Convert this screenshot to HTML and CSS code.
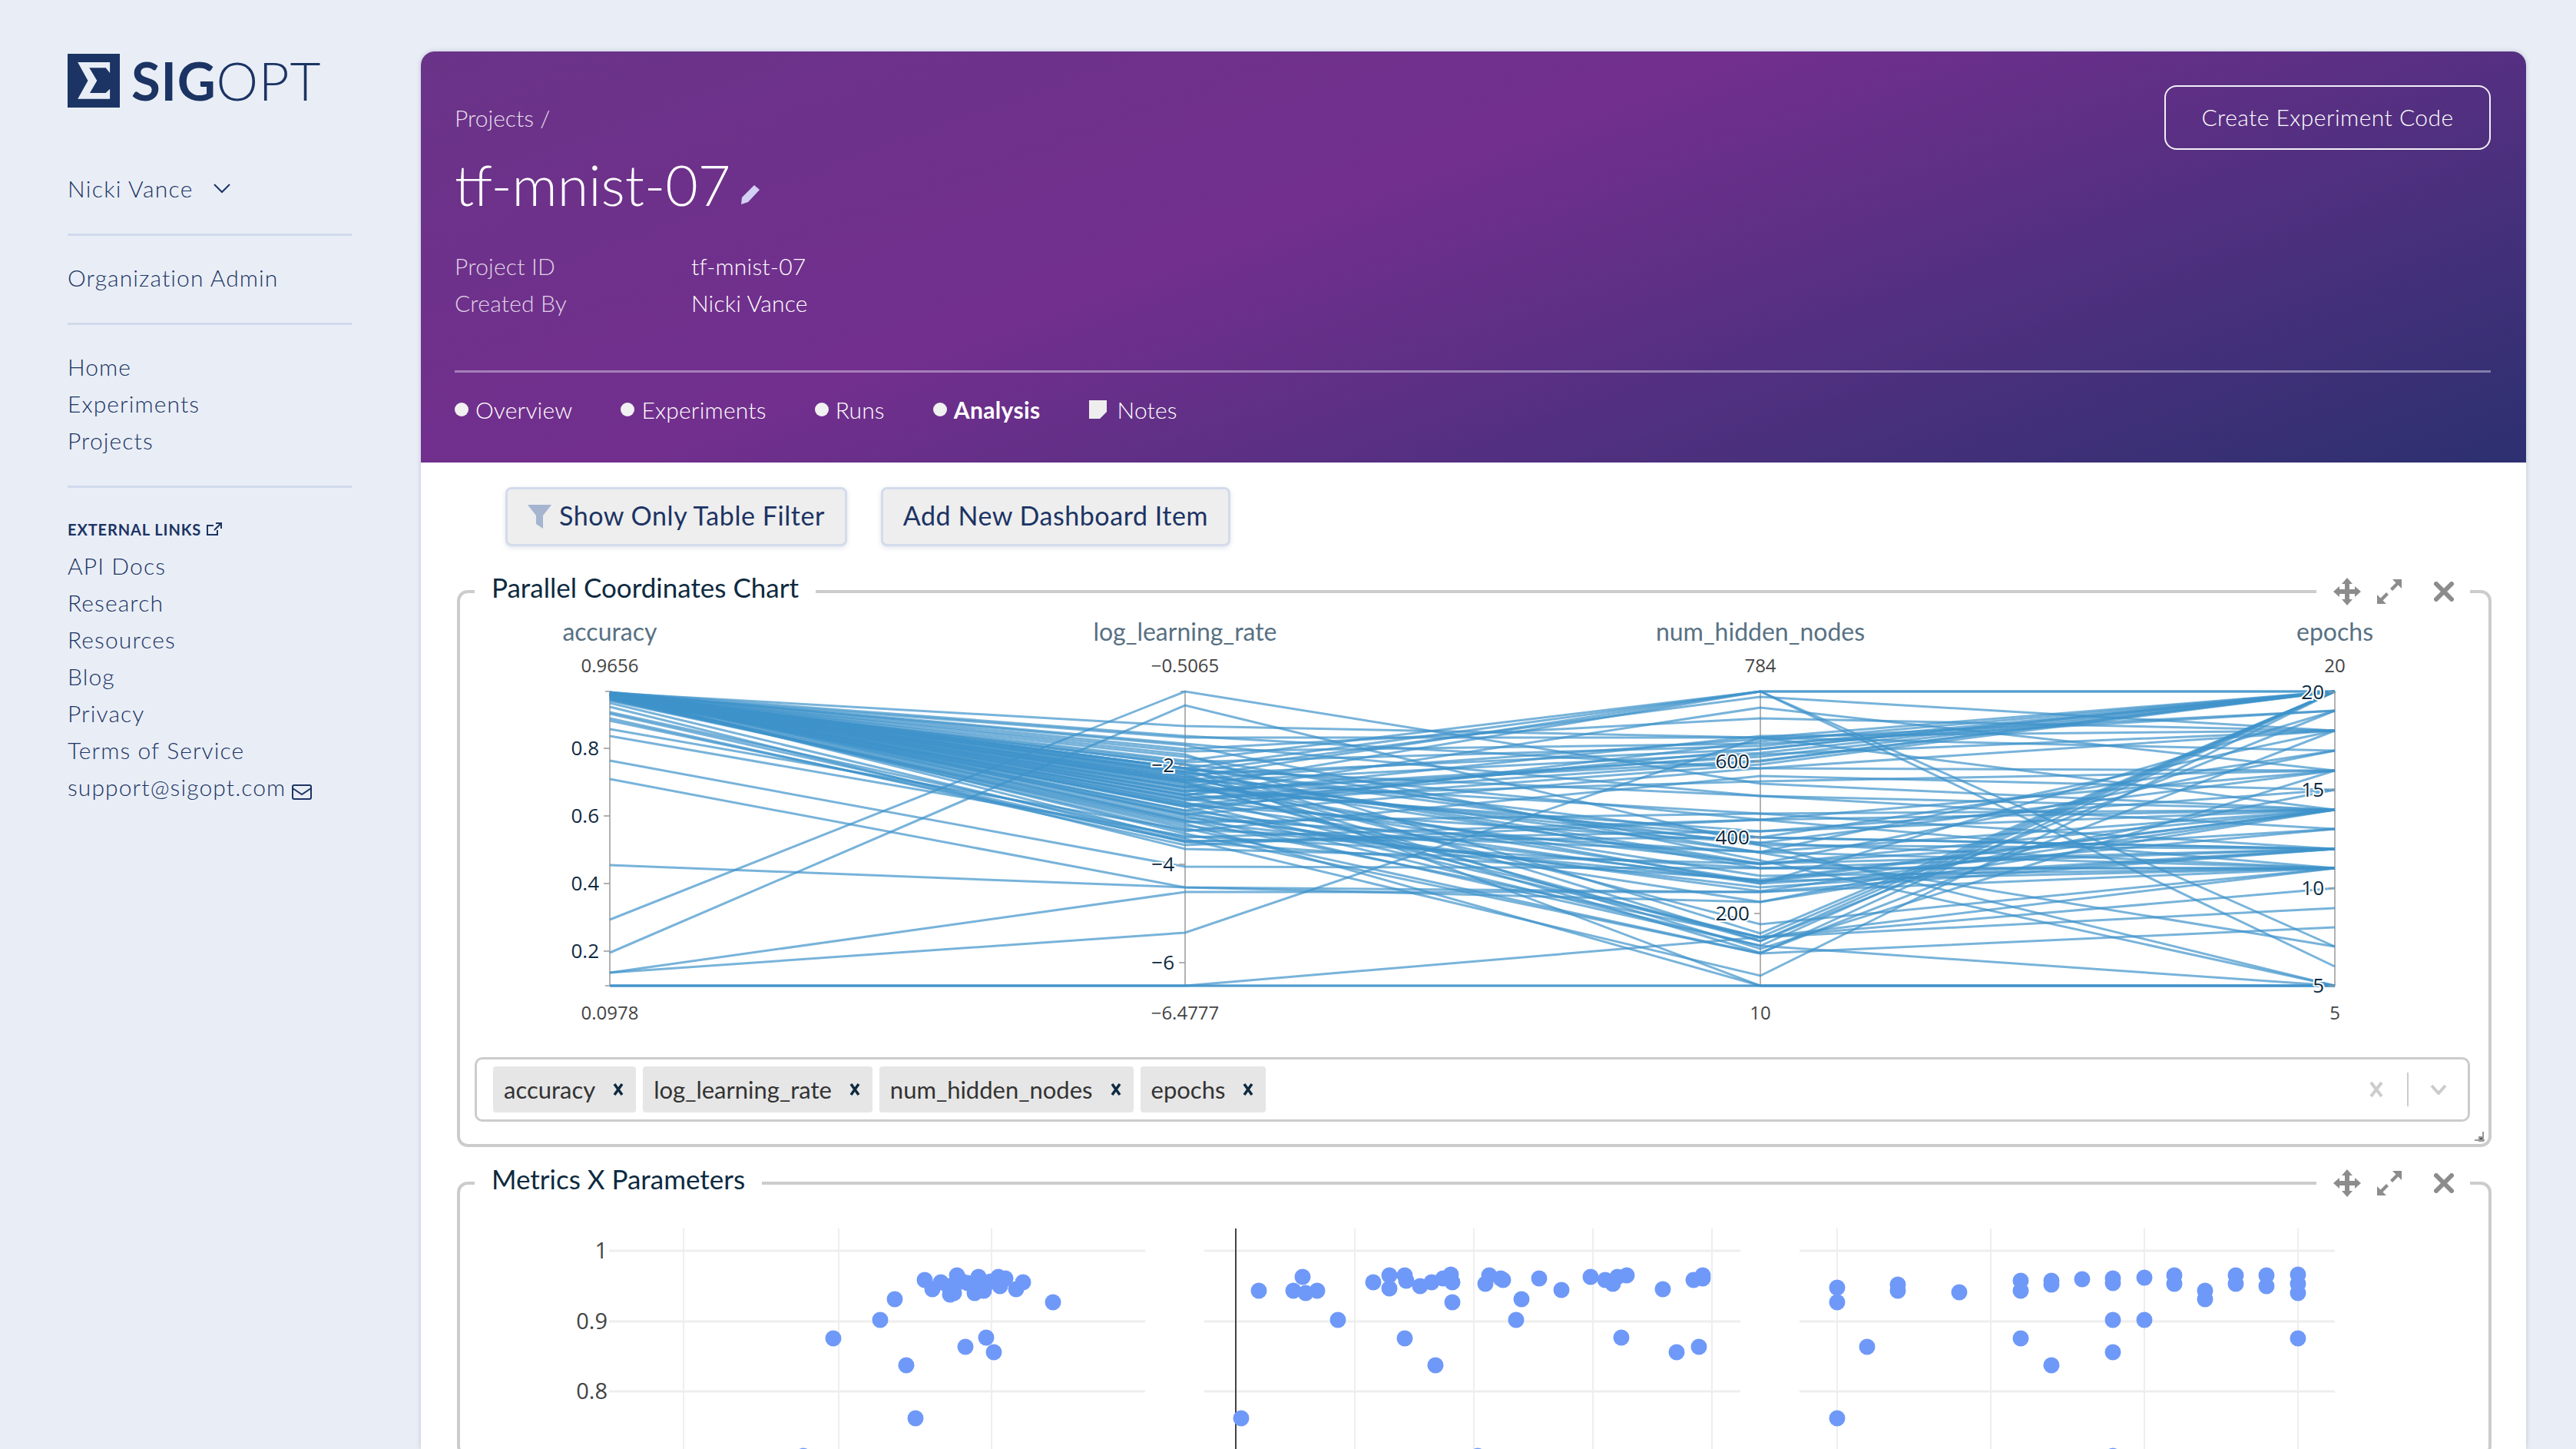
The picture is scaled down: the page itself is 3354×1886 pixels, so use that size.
FILE: index.html
```html
<!DOCTYPE html>
<html lang="en">
<head>
  <meta charset="UTF-8">
  <title>tf-mnist-07 - SigOpt</title>
  <link rel="stylesheet" href="styles.css">
</head>
<body>

  <aside class="sidebar">
    <div class="logo">
      <svg class="logo-mark" viewBox="246 210 190 210" preserveAspectRatio="none">
        <rect x="246" y="210" width="190" height="210" fill="#1c3464"/>
        <path d="M283 243H400V285L385 265H325L353 315 327 363H385L400 347V386H283L320 315Z" fill="#e9eef6"/>
      </svg>
      <span class="logo-text"><b>SIG</b>OPT</span>
    </div>

    <div class="user">
      Nicki Vance
      <svg class="user-chevron" viewBox="0 0 22 13"><path d="M1 1l10 10L21 1"/></svg>
    </div>

    <nav class="nav-section"><a>Organization Admin</a></nav>

    <nav class="nav-section">
      <a>Home</a>
      <a>Experiments</a>
      <a>Projects</a>
    </nav>

    <nav class="nav-section">
      <div class="nav-title">
        EXTERNAL LINKS
        <svg viewBox="0 0 20 18"><path d="M14 10v6H1V4h8M12 1h7v7M19 1l-9 9"/></svg>
      </div>
      <a>API Docs</a>
      <a>Research</a>
      <a>Resources</a>
      <a>Blog</a>
      <a>Privacy</a>
      <a>Terms of Service</a>
      <a>support@sigopt.com <svg class="mail" viewBox="0 0 26 20"><rect x="1" y="1" width="24" height="18" rx="2"/><path d="M1 5l12 8 12-8"/></svg></a>
    </nav>
  </aside>

  <main class="main">
    <header class="hero">
      <div class="hero-top">
        <div class="crumb">Projects /</div>
        <a class="hero-btn">Create Experiment Code</a>
      </div>
      <h1>tf-mnist-07 <svg class="pencil" viewBox="0 0 26 26"><path d="M18 1l7 6L10 23l-9 3 1-9z"/></svg></h1>
      <dl class="meta">
        <dt>Project ID</dt><dd>tf-mnist-07</dd>
        <dt>Created By</dt><dd>Nicki Vance</dd>
      </dl>
      <ul class="tabs">
        <li><i class="dot"></i>Overview</li>
        <li><i class="dot"></i>Experiments</li>
        <li><i class="dot"></i>Runs</li>
        <li class="active"><i class="dot"></i>Analysis</li>
        <li><svg class="note" viewBox="0 0 23 24"><path d="M0 0h23v15l-9 9H0z"/></svg>Notes</li>
      </ul>
    </header>

    <section class="dash">
      <div class="actions">
        <button type="button"><svg class="funnel" viewBox="0 0 31 31"><path d="M0 0h31L20 14v17l-9-6V14z"/></svg>Show Only Table Filter</button>
        <button type="button">Add New Dashboard Item</button>
      </div>

      <div class="card card-parcoords">
        <div class="card-head">
          <h2>Parallel Coordinates Chart</h2>
          <div class="tools">
            <svg class="tool-move" viewBox="0 0 36 36"><path d="M18 0l7 8h-4v7h7v-4l8 7-8 7v-4h-7v7h4l-7 8-7-8h4v-7H8v4l-8-7 8-7v4h7V8h-4z"/></svg>
            <svg class="tool-expand" viewBox="0 0 32 32"><path d="M20 0H32V12L27.5 7.5 20 15 17 12 24.500 4.500ZM12 32H0V20L4.500 24.500 12 17 15 20 7.500 27.500Z"/></svg>
            <svg class="tool-close" viewBox="0 0 26 26"><path d="M3 3l20 20M23 3L3 23"/></svg>
          </div>
        </div>

        <svg id="parcoords" class="parcoords" viewBox="599 772 2640 588"></svg>

        <div class="select">
          <span class="chip">accuracy<svg viewBox="0 0 14 18"><path d="M2 2l10 14M12 2L2 16"/></svg></span>
          <span class="chip">log_learning_rate<svg viewBox="0 0 14 18"><path d="M2 2l10 14M12 2L2 16"/></svg></span>
          <span class="chip">num_hidden_nodes<svg viewBox="0 0 14 18"><path d="M2 2l10 14M12 2L2 16"/></svg></span>
          <span class="chip">epochs<svg viewBox="0 0 14 18"><path d="M2 2l10 14M12 2L2 16"/></svg></span>
          <div class="select-ctrl">
            <svg class="select-clear" viewBox="0 0 20 22"><path d="M3 2l14 18M17 2L3 20"/></svg>
            <i class="select-sep"></i>
            <svg class="select-arrow" viewBox="0 0 22 14"><path d="M2 2l9 10 9-10"/></svg>
          </div>
        </div>

        <svg class="resize" viewBox="0 0 13 13"><path d="M11 0v13M0 11h13M6 7h5v5H6z"/></svg>
      </div>

      <div class="card card-scatter">
        <div class="card-head">
          <h2>Metrics X Parameters</h2>
          <div class="tools">
            <svg class="tool-move" viewBox="0 0 36 36"><path d="M18 0l7 8h-4v7h7v-4l8 7-8 7v-4h-7v7h4l-7 8-7-8h4v-7H8v4l-8-7 8-7v4h7V8h-4z"/></svg>
            <svg class="tool-expand" viewBox="0 0 32 32"><path d="M20 0H32V12L27.5 7.5 20 15 17 12 24.500 4.500ZM12 32H0V20L4.500 24.500 12 17 15 20 7.500 27.500Z"/></svg>
            <svg class="tool-close" viewBox="0 0 26 26"><path d="M3 3l20 20M23 3L3 23"/></svg>
          </div>
        </div>
        <div class="scatter-row">
          <svg id="scatter1" class="scatter-a" viewBox="740 1542 790 350"></svg>
          <svg id="scatter2" class="scatter-b" viewBox="1530 1542 770 350"></svg>
          <svg id="scatter3" class="scatter-c" viewBox="2300 1542 760 350"></svg>
        </div>
      </div>
    </section>
  </main>

  <script src="chart.js"></script>

</body>
</html>
```

FILE: styles.css
```css
* {
  box-sizing: border-box;
}

html, body {
  margin: 0;
  height: 1886px;
  overflow: hidden;
}

body {
  display: flex;
  background: #e9eef6;
  font-family: Lato, "Open Sans", sans-serif;
  color: #1c3464;
}

/* sidebar */

.sidebar {
  width: 548px;
  flex: none;
  padding: 70px 90px 0 88px;
  font-size: 30px;
  font-weight: 300;
  letter-spacing: 1.1px;
}

.logo {
  display: flex;
  align-items: center;
  height: 70px;
}

.logo-mark {
  width: 68px;
  height: 70px;
  margin-right: 15px;
}

.logo-text {
  font-size: 69px;
  line-height: 70px;
  letter-spacing: 0.7px;
}

.logo-text b {
  font-weight: 700;
}

.user {
  display: flex;
  align-items: center;
  height: 50px;
  margin-top: 81px;
  padding-bottom: 2px;
  letter-spacing: 1.3px;
}

.user-chevron {
  width: 22px;
  height: 13px;
  margin-left: 26px;
  fill: none;
  stroke: #1c3464;
  stroke-width: 2;
}

.nav-section {
  margin-top: 33px;
  padding-top: 30px;
  padding-bottom: 2px;
  border-top: 3px solid #d0daec;
}

.nav-section a {
  display: block;
  line-height: 48px;
}

.mail {
  width: 26px;
  height: 20px;
  margin-left: -2px;
  vertical-align: -5px;
  fill: none;
  stroke: #1c3464;
  stroke-width: 2;
}

.nav-title {
  display: flex;
  align-items: center;
  height: 30px;
  margin: 9px 0 8px;
  font-size: 20px;
  font-weight: 700;
  letter-spacing: 0.9px;
}

.nav-title svg {
  width: 20px;
  height: 18px;
  margin-left: 7px;
  fill: none;
  stroke: #1c3464;
  stroke-width: 2;
}

/* page */

.main {
  width: 2741px;
  flex: none;
  margin-top: 67px;
  background: #fff;
  border-radius: 18px 18px 0 0;
  box-shadow: 0 0 6px rgba(60, 70, 120, 0.25);
}

.hero {
  height: 535px;
  padding: 44px 46px 0 44px;
  border-radius: 18px 18px 0 0;
  background: linear-gradient(160deg, #6a3388 0%, #722f8e 41%, #2c3070 100%);
  color: #fff;
}

.hero-top {
  display: flex;
  align-items: center;
  justify-content: space-between;
  height: 84px;
}

.crumb {
  font-size: 30px;
  font-weight: 300;
  color: rgba(255, 255, 255, 0.85);
}

.hero-btn {
  width: 425px;
  height: 84px;
  line-height: 79px;
  text-align: center;
  border: 2px solid #f2f0f5;
  border-radius: 16px;
  font-size: 30px;
  font-weight: 300;
  letter-spacing: 0.45px;
}

.hero h1 {
  display: flex;
  align-items: flex-end;
  height: 86px;
  margin: 2px 0 0;
  font-size: 73.5px;
  line-height: 86px;
  font-weight: 300;
  white-space: pre;
}

.pencil {
  width: 26px;
  height: 26px;
  margin: 0 0 17px -7px;
  fill: #d3d0f5;
}

.meta {
  display: grid;
  grid-template-columns: 308px auto;
  margin: 39px 0 0;
  font-size: 30px;
  font-weight: 300;
  line-height: 48px;
  letter-spacing: 0.2px;
}

.meta dt {
  color: rgba(255, 255, 255, 0.8);
}

.meta dd {
  margin: 0;
}

.tabs {
  display: flex;
  gap: 63px;
  height: 103px;
  margin: 64px 0 0;
  padding: 0 0 4px;
  align-items: center;
  list-style: none;
  border-top: 3px solid rgba(255, 255, 255, 0.38);
  font-size: 30px;
  font-weight: 300;
  letter-spacing: 0.2px;
}

.tabs li {
  display: flex;
  align-items: center;
}

.tabs .active {
  font-weight: 700;
  letter-spacing: 0.35px;
}

.dot {
  width: 18px;
  height: 18px;
  margin-right: 9px;
  border-radius: 50%;
  background: #f1f1f1;
}

.note {
  width: 23px;
  height: 24px;
  margin-right: 14px;
  fill: #eee;
}

/* dashboard */

.dash {
  padding: 32px 45px 0 47px;
}

.actions {
  display: flex;
  gap: 44px;
  margin-left: 63px;
}

.actions button {
  display: flex;
  align-items: center;
  height: 77px;
  padding: 0 26px 5px;
  background: #eee;
  border: 3px solid #d3dbec;
  border-radius: 8px;
  box-shadow: 0 2px 6px rgba(40, 60, 110, 0.14);
  font-family: inherit;
  font-size: 34px;
  color: #1c3464;
  letter-spacing: 0.55px;
}

.funnel {
  width: 31px;
  height: 31px;
  margin: 5px 10px 0 0;
  fill: #a5b4cf;
}

.card {
  position: relative;
  border: 4px solid #ccc;
  border-radius: 14px;
}

.card-parcoords {
  margin-top: 57px;
  padding-bottom: 29px;
}

.card-scatter {
  margin-top: 45px;
}

.card-head {
  position: absolute;
  top: -27px;
  left: 19px;
  right: 24px;
  height: 50px;
  display: flex;
  justify-content: space-between;
  align-items: center;
}

.card-head h2 {
  align-self: flex-start;
  margin: 0;
  padding: 0 22px;
  background: #fff;
  font-size: 35px;
  line-height: 38px;
  height: 50px;
  font-weight: 400;
  color: #0e2a40;
}

.tools {
  width: 200px;
  height: 50px;
  display: flex;
  align-items: center;
  background: #fff;
}

.tool-move {
  width: 36px;
  height: 36px;
  margin-left: 22px;
  fill: #8c8c8c;
}

.tool-expand {
  width: 32px;
  height: 32px;
  margin-left: 21px;
  fill: #8c8c8c;
}

.tool-close {
  width: 26px;
  height: 26px;
  margin-left: 42px;
  fill: none;
  stroke: #8c8c8c;
  stroke-width: 6;
  stroke-linecap: round;
}

.parcoords {
  display: block;
  width: 2640px;
  height: 588px;
  margin-bottom: 16px;
}

.select {
  display: flex;
  align-items: center;
  gap: 9px;
  height: 84px;
  margin: 0 24px 0 19px;
  padding-left: 21px;
  border: 3px solid #ccc;
  border-radius: 10px;
}

.chip {
  display: flex;
  align-items: center;
  height: 60px;
  padding: 0 15px 0 14px;
  background: #e6e6e6;
  border-radius: 4px;
  font-size: 31px;
  color: #333;
}

.chip svg {
  width: 16px;
  height: 18px;
  margin-left: 22px;
  fill: none;
  stroke: #0e2a40;
  stroke-width: 3.5;
}

.select-ctrl {
  display: flex;
  align-items: center;
  margin-left: auto;
  padding-right: 27px;
}

.select-clear {
  width: 20px;
  height: 22px;
  fill: none;
  stroke: #ccc;
  stroke-width: 4;
}

.select-sep {
  width: 2px;
  height: 44px;
  margin: 0 28px 0 30px;
  background: #ccc;
}

.select-arrow {
  width: 22px;
  height: 14px;
  fill: none;
  stroke: #ccc;
  stroke-width: 4;
}

.resize {
  position: absolute;
  right: 5px;
  bottom: 3px;
  width: 13px;
  height: 13px;
  fill: #555;
  stroke: #999;
  stroke-width: 2;
}

.scatter-row {
  display: flex;
  padding-left: 141px;
}

.scatter-row svg {
  display: block;
  flex: none;
  height: 350px;
}

.scatter-a {
  width: 790px;
}

.scatter-b {
  width: 770px;
}

.scatter-c {
  width: 760px;
}

/* chart text and marks */

.axis-title {
  font-family: Lato, sans-serif;
  font-size: 32px;
  fill: #587183;
  text-anchor: middle;
}

.axis-end {
  font-family: "Open Sans", sans-serif;
  font-size: 24px;
  fill: #444;
  text-anchor: middle;
}

.axis-tick {
  font-family: "Open Sans", sans-serif;
  font-size: 26px;
  fill: #0e2a40;
  text-anchor: end;
  paint-order: stroke;
  stroke: #fff;
  stroke-width: 4px;
}

.axis-line {
  stroke: #999;
  stroke-width: 1.500;
  fill: none;
}

.pc-line {
  fill: none;
  stroke: #3f93cb;
  stroke-width: 3;
  stroke-opacity: 0.7;
}

.grid-h {
  stroke: #eee;
  stroke-width: 3;
}

.grid-v {
  stroke: #eee;
  stroke-width: 2;
}

.grid-zero {
  stroke: #444;
  stroke-width: 2;
}

.dot-mark {
  fill: #6f99f8;
}

.y-label {
  font-family: "Open Sans", sans-serif;
  font-size: 29px;
  fill: #444;
  text-anchor: end;
}
```

FILE: chart.js
```js
const NS = "http://www.w3.org/2000/svg";

function add(svg, tag, attrs, text) {
  const el = document.createElementNS(NS, tag);
  for (const k in attrs) el.setAttribute(k, attrs[k]);
  if (text) el.textContent = text;
  svg.appendChild(el);
  return el;
}

// axis positions of the parallel chart
const axes = [
  { x: 794, name: "accuracy", top: "0.9656", bottom: "0.0978", ticks: [["0.8", 974], ["0.6", 1062], ["0.4", 1150], ["0.2", 1238]] },
  { x: 1543, name: "log_learning_rate", top: "\u22120.5065", bottom: "\u22126.4777", ticks: [["\u22122", 996], ["\u22124", 1125], ["\u22126", 1253]] },
  { x: 2292, name: "num_hidden_nodes", top: "784", bottom: "10", ticks: [["600", 991], ["400", 1090], ["200", 1189]] },
  { x: 3040, name: "epochs", top: "20", bottom: "5", ticks: [["20", 901], ["15", 1028], ["10", 1156], ["5", 1283]] }
];

// one row per run: y of the line on each axis
const runs = [
  [903,1000,900,900],[905,1012,900,900],[902,990,900,1258],[906,1025,900,1232],
  [904,1005,907,951],[907,1035,921,1003],[901,975,935,951],[1197,900,1020,1054],
  [1240,918,1100,1105],[903,960,960,900],[905,992,971,900],[902,1008,975,900],
  [904,1018,980,900],[908,1030,985,900],[906,1042,991,900],[903,978,968,925],
  [907,1050,995,900],[905,1060,1000,951],[909,1038,1017,1003],[902,968,1036,1054],
  [904,1002,1036,1079],[911,1070,1059,1054],[906,1015,1059,1105],[903,995,1067,1054],
  [927,1090,1067,1130],[938,1095,1082,1028],[905,1028,1082,1054],[902,1000,1090,1105],
  [907,1048,1097,1130],[904,1022,1097,1003],[949,1080,1109,1054],[908,1065,1109,1130],
  [903,1012,1109,951],[906,1040,1124,1105],[905,1005,1124,977],[958,1088,1130,1105],
  [910,1075,1147,1054],[902,1032,1147,1130],[904,1055,1147,1079],[906,1018,1150,925],
  [1126,1155,1161,1105],[1266,1161,1161,1130],[1014,1155,1174,1054],[990,1128,1130,1130],
  [903,1058,1174,1028],[907,1010,1203,1130],[905,1045,1220,900],[909,1068,1220,1156],
  [903,1035,1220,1182],[904,1020,1225,900],[906,1062,1231,900],[902,1050,1231,1283],
  [908,1078,1241,900],[905,1085,1241,1207],[1266,1214,960,1054],[904,1092,1270,900],
  [906,1000,1283,1283],[912,1072,1283,1283],[1283,1283,1220,1130],[1283,1283,1283,1283],
  [1283,1283,1283,1283],[935,1100,1067,1003],[915,1095,1090,977],[920,1105,1124,1079],
  [902,1000,1100,1283],[904,985,1110,1232],[901,1015,1125,1054],[903,1045,1150,1105],
  [902,970,1120,1283],[904,1025,1140,1130],[901,1005,1130,1130],[903,1060,1160,1054],
  [902,982,1215,900],[904,995,1225,925],[903,1008,1235,1003],[905,1018,1240,951],
  [904,1015,962,925],[903,1035,958,951],[905,1048,975,900],[902,1030,990,900],
  [906,1055,965,900],[903,1040,982,951],[901,958,1000,1003],[908,1082,1010,1028],
  [929,1096,1145,1054],[903,1068,1155,1105],[902,945,960,977],[905,1024,1090,1105]
];

const pc = document.getElementById("parcoords");

axes.forEach(a => {
  add(pc, "text", { class: "axis-title", x: a.x, y: 834 }, a.name);
  add(pc, "text", { class: "axis-end", x: a.x, y: 875 }, a.top);
  add(pc, "text", { class: "axis-end", x: a.x, y: 1327 }, a.bottom);
  add(pc, "path", { class: "axis-line", d: `M${a.x - 6} 900H${a.x}V1283H${a.x - 6}` });
});

runs.forEach(r => {
  const pts = r.map((y, i) => axes[i].x + "," + y).join(" ");
  add(pc, "polyline", { class: "pc-line", points: pts });
});

axes.forEach(a => {
  a.ticks.forEach(t => {
    add(pc, "path", { class: "axis-line", d: `M${a.x - 8} ${t[1]}H${a.x}` });
    add(pc, "text", { class: "axis-tick", x: a.x - 14, y: t[1] + 9 }, t[0]);
  });
});

// scatter panels, y of accuracy grid lines shared
const rows = [["1", 1628], ["0.9", 1720], ["0.8", 1811]];

const panels = [
  {
    id: "scatter1", x1: 793, x2: 1491, verts: [890, 1092, 1291], labels: true,
    dots: [[1204,1666],[1214,1678],[1225,1669],[1235,1674],[1237,1685],[1246,1660],[1242,1683],[1269,1683],
      [1274,1662],[1281,1680],[1300,1662],[1302,1674],[1309,1664],[1323,1678],[1332,1669],[1371,1695],
      [1165,1691],[1146,1718],[1085,1742],[1257,1753],[1284,1741],[1294,1760],[1180,1777],[1192,1846],
      [1046,1895],[1260,1670],[1290,1668],[1253,1668],[1279,1668]]
  },
  {
    id: "scatter2", x1: 1568, x2: 2266, verts: [1764, 1919, 2074, 2229], zero: 1609,
    dots: [[1639,1680],[1684,1680],[1696,1662],[1616,1846],[1700,1683],[1715,1680],[1742,1718],
      [1788,1669],[1809,1660],[1809,1677],[1829,1660],[1831,1667],[1849,1674],[1864,1669],[1879,1664],
      [1889,1659],[1891,1669],[1891,1695],[1829,1742],[1869,1777],[1934,1671],[1939,1660],[1954,1664],
      [1957,1666],[1981,1691],[1974,1718],[2004,1664],[2033,1679],[2071,1662],[2090,1666],[2100,1671],
      [2106,1662],[2118,1660],[2111,1741],[2165,1678],[2183,1760],[2205,1666],[2217,1660],[2217,1664],
      [2212,1753],[1924,1895]]
  },
  {
    id: "scatter3", x1: 2343, x2: 3040, verts: [2392, 2592, 2792, 2992],
    dots: [[2392,1676],[2392,1695],[2392,1846],[2431,1753],[2471,1672],[2471,1680],[2551,1682],[2631,1667],[2631,1680],
      [2631,1742],[2671,1667],[2671,1672],[2671,1777],[2711,1665],[2751,1664],[2751,1670],[2751,1718],[2751,1760],[2751,1895],
      [2792,1663],[2792,1718],[2831,1660],[2831,1671],[2871,1680],[2871,1691],[2911,1660],[2911,1671],
      [2951,1660],[2951,1674],[2992,1659],[2992,1671],[2992,1683],[2992,1742]]
  }
];

panels.forEach(p => {
  const svg = document.getElementById(p.id);
  rows.forEach(r => {
    add(svg, "line", { class: "grid-h", x1: p.x1, x2: p.x2, y1: r[1], y2: r[1] });
    if (p.labels) add(svg, "text", { class: "y-label", x: p.x1 - 2, y: r[1] + 10 }, r[0]);
  });
  p.verts.forEach(x => add(svg, "line", { class: "grid-v", x1: x, x2: x, y1: 1599, y2: 1892 }));
  if (p.zero) add(svg, "line", { class: "grid-zero", x1: p.zero, x2: p.zero, y1: 1599, y2: 1892 });
  p.dots.forEach(d => add(svg, "circle", { class: "dot-mark", cx: d[0], cy: d[1], r: 10.5 }));
});
```
